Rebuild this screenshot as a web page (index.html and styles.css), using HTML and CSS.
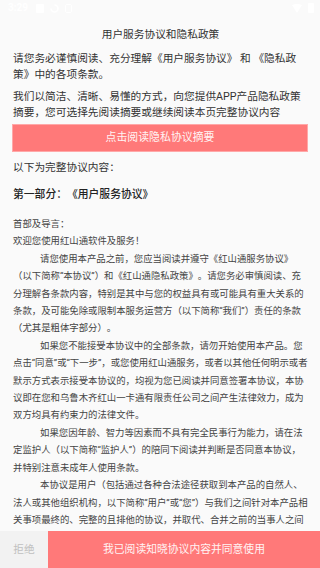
FILE: index.html
```html
<!DOCTYPE html>
<html lang="zh-CN">
<head>
<meta charset="UTF-8">
<title>用户服务协议和隐私政策</title>
<link rel="stylesheet" href="styles.css">
</head>
<body>
	<div class="page">
		<div class="status">
			<span class="time">3:29</span>
			<span class="ico sq"></span>
			<svg class="ico" width="9" height="9" viewBox="0 0 9 9"><path d="M4.5 1 A3.5 3.5 0 1 1 1 4.5" fill="none" stroke="#fff" stroke-width="1.6"/></svg>
			<span class="ico sd"></span>
			<span class="grow"></span>
			<svg class="ico" width="10" height="9" viewBox="0 0 10 9"><path d="M0 1 Q5 -1 10 1 L5 9 Z" fill="#fff"/></svg>
			<span class="ico bat"></span>
		</div>
		<div class="scroll">
			<h3 class="title">用户服务协议和隐私政策</h3>
			<p class="intro">请您务必谨慎阅读、充分理解《用户服务协议》 和 《隐私政策》中的各项条款。</p>
			<p class="intro">我们以简洁、清晰、易懂的方式，向您提供APP产品隐私政策摘要，您可选择先阅读摘要或继续阅读本页完整协议内容</p>
			<a class="btn-summary" href="#">点击阅读隐私协议摘要</a>
			<p class="lead">以下为完整协议内容：</p>
			<h4 class="part">第一部分：《用户服务协议》</h4>
			<div class="doc">
				<p>首部及导言：</p>
				<p>欢迎您使用红山通软件及服务！</p>
				<p class="ind">请您使用本产品之前，您应当阅读并遵守《红山通服务协议》（以下简称“本协议”）和《红山通隐私政策》。请您务必审慎阅读、充分理解各条款内容，特别是其中与您的权益具有或可能具有重大关系的条款，及可能免除或限制本服务运营方（以下简称“我们”）责任的条款（尤其是粗体字部分）。</p>
				<p class="ind">如果您不能接受本协议中的全部条款，请勿开始使用本产品。您点击“同意”或“下一步”，或您使用红山通服务，或者以其他任何明示或者默示方式表示接受本协议的，均视为您已阅读并同意签署本协议，本协议即在您和乌鲁木齐红山一卡通有限责任公司之间产生法律效力，成为双方均具有约束力的法律文件。</p>
				<p class="ind">如果您因年龄、智力等因素而不具有完全民事行为能力，请在法定监护人（以下简称“监护人”）的陪同下阅读并判断是否同意本协议，并特别注意未成年人使用条款。</p>
				<p class="ind">本协议是用户（包括通过各种合法途径获取到本产品的自然人、法人或其他组织机构，以下简称“用户”或“您”）与我们之间针对本产品相关事项最终的、完整的且排他的协议，并取代、合并之前的当事人之间</p>
			</div>
		</div>
		<div class="bar">
			<a class="refuse" href="#">拒绝</a>
			<a class="agree" href="#">我已阅读知晓协议内容并同意使用</a>
		</div>
	</div>
</body>
</html>
```

FILE: styles.css
```css
body {margin: 0;background-color: #fafafa;font-family: Roboto, "Noto Sans CJK SC", sans-serif;color: #333;text-spacing-trim: space-all;}
p, h3, h4 {margin: 0;font-weight: normal;}
a {text-decoration: none;}
.page {width: 320px;height: 568px;display: flex;flex-direction: column;overflow: hidden;}

.status {height: 16px;display: flex;align-items: center;gap: 6px;padding: 0 6px 0 8px;flex-shrink: 0;}
.status .time {color: #fff;font-size: 10px;font-weight: bold;line-height: 16px;}
.status .ico {display: block;}
.status .sq {width: 8px;height: 9px;background-color: #fff;border-radius: 1px;margin-left: 2px;}
.status .sd {width: 7px;height: 9px;border: 1.5px solid #fff;border-radius: 2px;box-sizing: border-box;}
.status .grow {flex: 1;}
.status .bat {width: 6px;height: 10px;background-color: #fff;border-radius: 1px;}

.scroll {flex: 1;overflow: hidden;padding: 11px 12px 0 13px;font-size: 10.7px;line-height: 16px;}
.title {text-align: center;font-size: 10.7px;line-height: 16px;margin-bottom: 8px;}
.intro {margin-bottom: 6px;}
.btn-summary {display: block;height: 28px;line-height: 26px;box-sizing: border-box;margin: -3px 0 0 -1px;background-color: #ff7979;border: 1px solid #ffa8a8;color: #fff4f4;text-align: center;font-size: 10.9px;}
.lead {margin-top: 8px;}
.part {margin-top: 11px;font-size: 10.8px;font-weight: 500;color: #222;}
.doc {margin-top: 12px;font-size: 9.4px;line-height: 17.4px;color: #444;}
.doc .ind {text-indent: 27px;}

.bar {height: 37px;display: flex;flex-shrink: 0;}
.bar .refuse {width: 48px;background-color: #f2f2f2;color: #c0c0c0;font-size: 10.7px;line-height: 37px;text-align: center;}
.bar .agree {flex: 1;background-color: #ff7979;color: #fff4f4;font-size: 10.8px;line-height: 37px;text-align: center;}
```
